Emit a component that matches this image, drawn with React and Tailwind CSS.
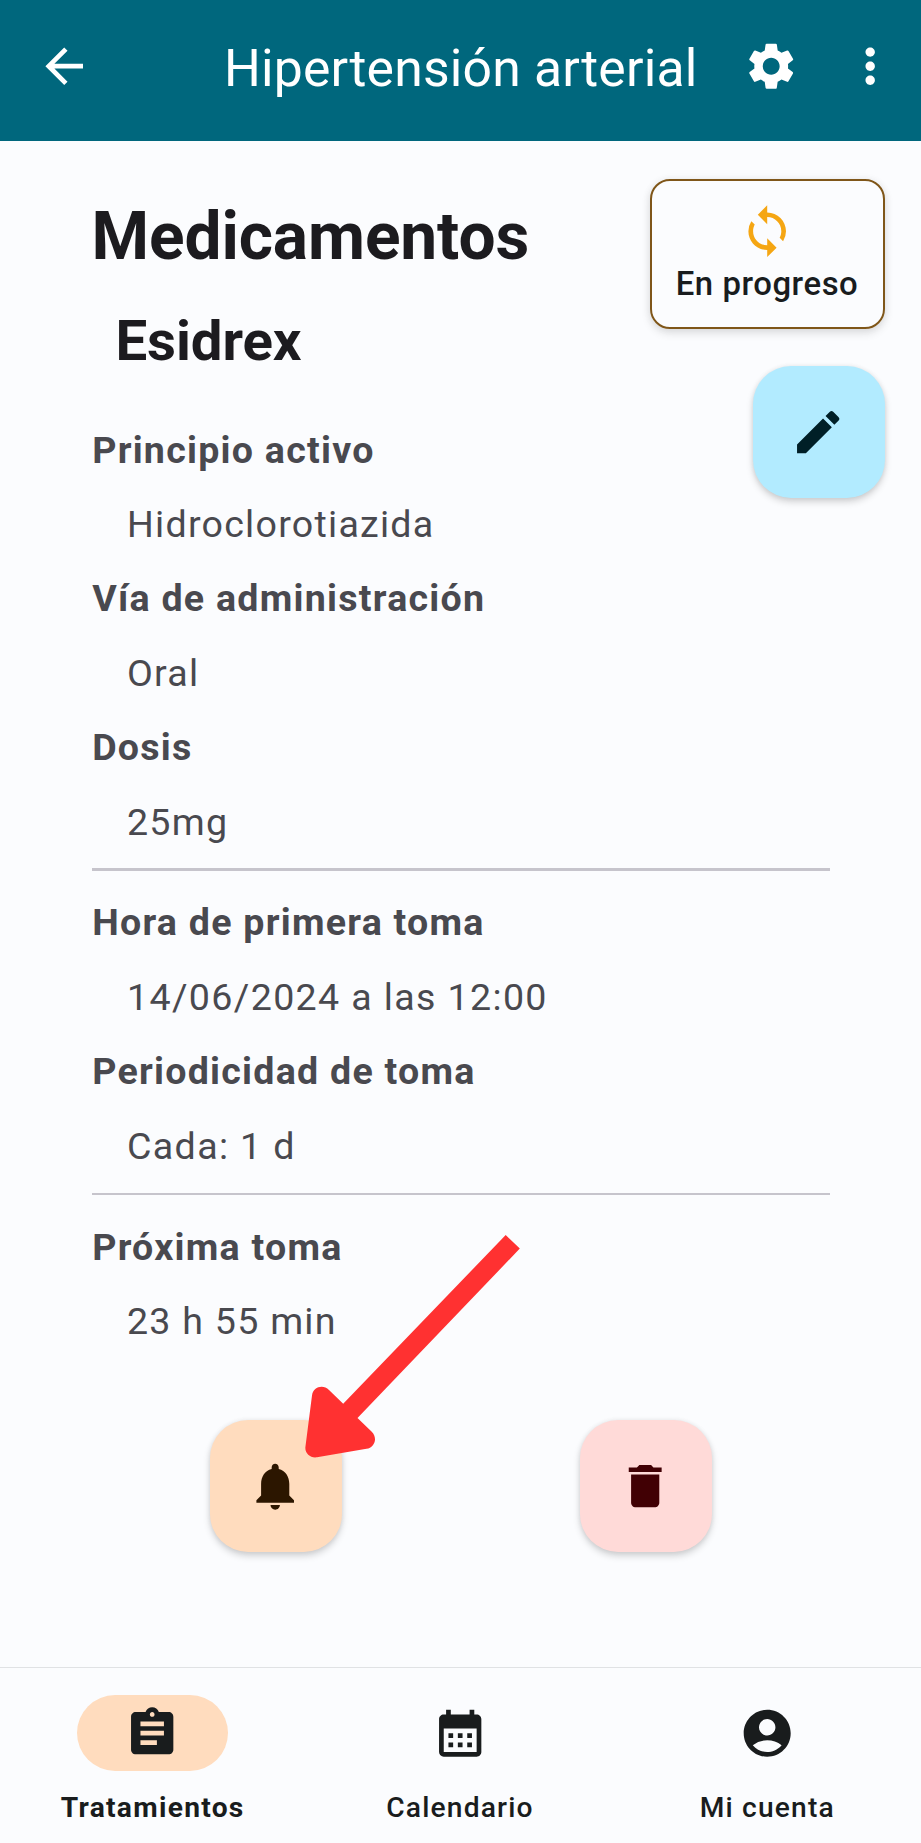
import {
  MdArrowBack,
  MdSettings,
  MdMoreVert,
  MdSync,
  MdEdit,
  MdNotifications,
  MdDelete,
  MdAssignment,
  MdCalendarMonth,
  MdAccountCircle,
} from "react-icons/md";

function Field({ label, value, numeric }) {
  return (
    <div className="text-[37.6px] leading-[74.4px] tracking-[1.25px] text-[#49494f]">
      <dt className="pl-[0.7px] font-bold">{label}</dt>
      <dd className={"pl-[35.5px] " + (numeric ? "tracking-[1.36px]" : "")}>{value}</dd>
    </div>
  );
}

function Divider() {
  return <hr className="mt-[9.5px] mb-[14.5px] h-[2.5px] border-0 bg-[#c6c4cc]" />;
}

function Fab({ label, className, children }) {
  return (
    <button
      aria-label={label}
      className={
        "flex size-[132px] items-center justify-center rounded-[38px] shadow-[0_4px_7px_rgba(0,0,0,0.17),0_0_5px_rgba(0,0,0,0.07)] " +
        className
      }
    >
      {children}
    </button>
  );
}

function NavItem({ icon: Icon, label, active }) {
  return (
    <button className="flex flex-col items-center pt-[27px] text-[#191c1d]">
      <span
        className={
          "flex h-[75.5px] w-[150.5px] items-center justify-center rounded-full " +
          (active ? "bg-[#ffdcbe]" : "")
        }
      >
        <Icon className="size-[56.4px]" />
      </span>
      <span
        className={
          "mt-[18px] text-[28.2px] leading-[38px] whitespace-nowrap " +
          (active ? "font-bold tracking-[1.28px]" : "font-medium tracking-[1.175px]")
        }
      >
        {label}
      </span>
    </button>
  );
}

export default function App() {
  return (
    <div className="relative flex h-[1843px] w-[921px] flex-col overflow-hidden bg-[#fbfcfe] font-[Roboto,sans-serif]">
      <header className="flex h-[141px] shrink-0 items-center bg-[#00677d] pb-[9px] pl-[36px] text-white">
        <MdArrowBack className="size-[56.4px] shrink-0" />
        <h1 className="ml-[131.5px] w-[474px] pt-[6px] text-[51.7px] leading-[60px] tracking-[0.19px] whitespace-nowrap">
          Hipertensión arterial
        </h1>
        <MdSettings className="ml-[45px] size-[56.4px] shrink-0" />
        <MdMoreVert className="ml-[42.5px] size-[56.4px] shrink-0" />
      </header>

      <main className="flex grow flex-col pt-[38px]">
        <div className="flex h-[233.500px] justify-between pr-[36.5px] pl-[91.5px]">
          <div className="pt-[20px] text-[#1c1b1f]">
            <h2 className="text-[65.8px] leading-[76px] font-bold tracking-[-0.1px]">
              Medicamentos
            </h2>
            <h3 className="mt-[33px] pl-[24px] text-[56.4px] leading-[66px] font-bold tracking-[-0.1px]">
              Esidrex
            </h3>
          </div>
          <div className="flex flex-col items-end gap-[37px]">
            <div className="flex h-[150px] w-[235px] shrink-0 flex-col items-center rounded-[20px] border-[2.5px] border-[#7f5619] pt-[22px] shadow-[0_4px_10px_rgba(0,0,0,0.12),0_0_8px_rgba(0,0,0,0.05)]">
              <MdSync className="size-[56.4px] shrink-0 text-[#f5a613]" />
              <span className="mt-[2px] text-[32.9px] leading-[46px] font-medium tracking-[0.55px] whitespace-nowrap text-[#191c1e]">
                En progreso
              </span>
            </div>
            <Fab label="Editar" className="shrink-0 bg-[#b2ebff] text-[#001f27]">
              <MdEdit className="size-[56.4px]" />
            </Fab>
          </div>
        </div>

        <dl className="w-[830px] pl-[91.5px]">
          <Field label="Principio activo" value="Hidroclorotiazida" />
          <Field label="Vía de administración" value="Oral" />
          <Field label="Dosis" value="25mg" />
          <Divider />
          <Field label="Hora de primera toma" value="14/06/2024 a las 12:00" numeric />
          <Field label="Periodicidad de toma" value="Cada: 1 d" numeric />
          <Divider />
          <Field label="Próxima toma" value="23 h 55 min" />
        </dl>

        <div className="mt-[62px] flex gap-[238px] pl-[209.5px]">
          <Fab label="Recordatorio" className="bg-[#ffdcbe] text-[#2c1600]">
            <MdNotifications className="size-[56.4px]" />
          </Fab>
          <Fab label="Eliminar" className="bg-[#ffdad8] text-[#410004]">
            <MdDelete className="size-[56.4px]" />
          </Fab>
        </div>
      </main>

      <nav className="grid h-[175px] w-[922px] shrink-0 -translate-x-px grid-cols-3 shadow-[0_-1px_0_#e0e2e4]">
        <NavItem icon={MdAssignment} label="Tratamientos" active />
        <NavItem icon={MdCalendarMonth} label="Calendario" />
        <NavItem icon={MdAccountCircle} label="Mi cuenta" />
      </nav>

      {/* Annotation arrow laid over the page, pointing at the reminder button */}
      <svg
        className="pointer-events-none absolute top-[1230px] left-[300px]"
        width="225"
        height="232"
        viewBox="300 1230 225 232"
        fill="#ff3131"
      >
        <path d="M505.700 1235 L519.800 1248.600 L357.500 1418 L371.500 1431.500 C378.200 1438 374.600 1447.400 366.500 1448.800 L317 1457.300 C310.500 1458.400 304.700 1453.500 305.400 1447 L312 1395.500 C313 1387 323 1384 329 1390 L343.200 1403.700 Z" />
      </svg>
    </div>
  );
}
